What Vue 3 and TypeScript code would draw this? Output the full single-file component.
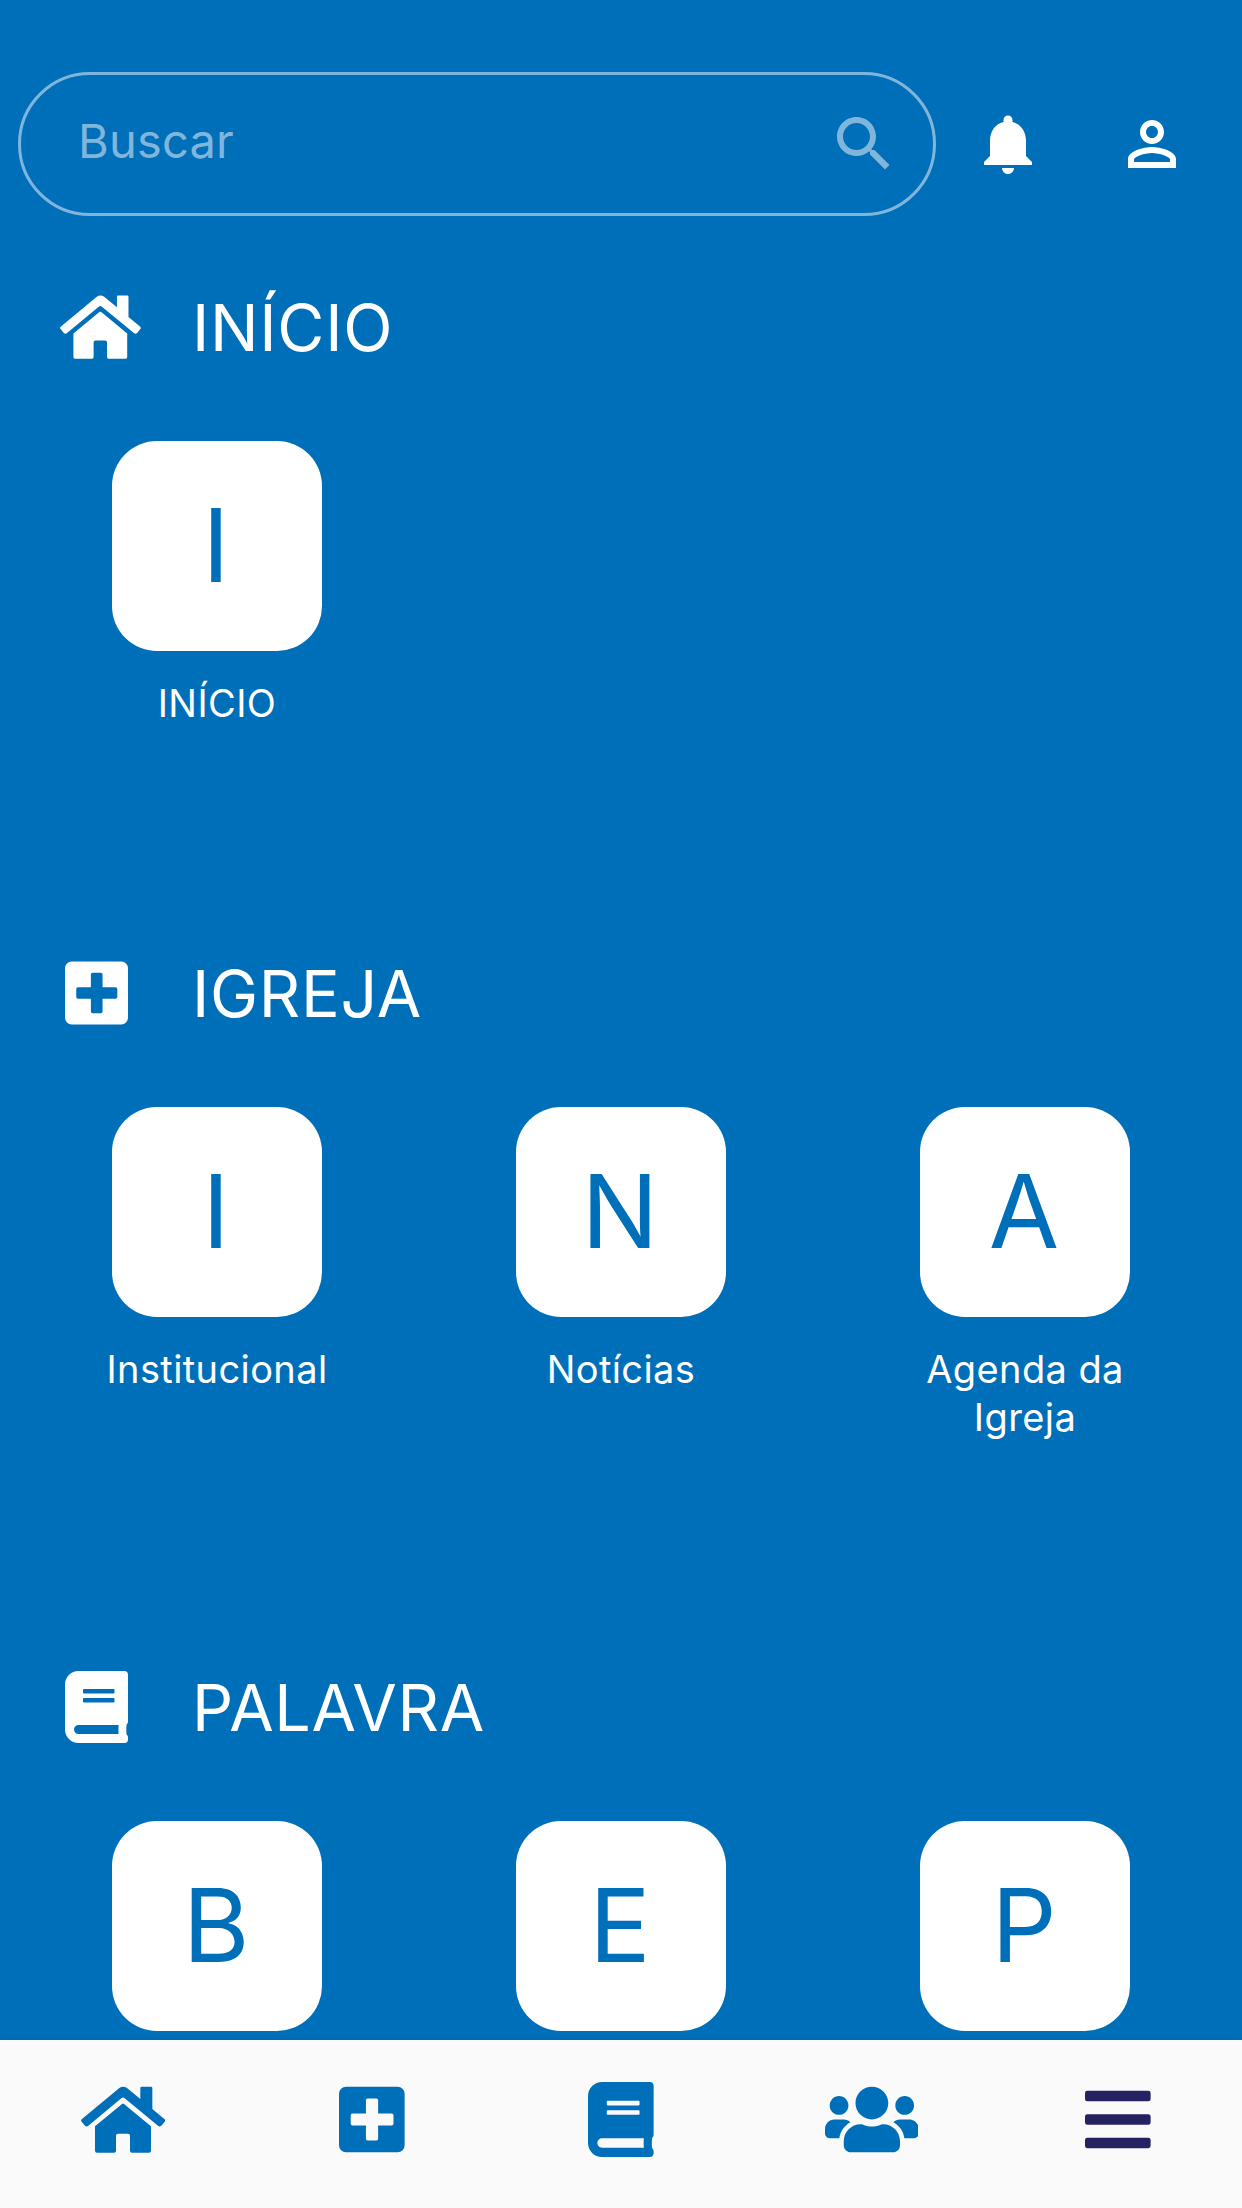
<script setup lang="ts">
interface Tile {
  letter: string
  label?: string
}
interface Section {
  icon: IconName
  title: string
  tiles: Tile[]
}
type IconName = 'home' | 'plus' | 'book' | 'users' | 'bars'

const icons: Record<IconName, { box: string; path: string }> = {
  home: {
    box: '63 157 253 225',
    path: 'M178 175Q189 167 201 175L241 208V175Q241 171 245 171H273Q277 171 277 175V238L313 268Q318 272 314 276L304 288Q299 293 294 288L194 206Q189 201 184 206L85 288Q80 293 75 288L65 276Q61 272 66 268ZM186 223Q189 220 192 223L273 290V363Q273 369 267 369H216Q210 369 210 363V318Q210 312 204 312H174Q168 312 168 318V363Q168 369 162 369H111Q105 369 105 363V290Z',
  },
  plus: {
    box: '0 0 448 512',
    path: 'M48 32H400a48 48 0 0 1 48 48V432a48 48 0 0 1-48 48H48a48 48 0 0 1-48-48V80a48 48 0 0 1 48-48ZM196 112a12 12 0 0 0-12 12V215H92a12 12 0 0 0-12 12V285a12 12 0 0 0 12 12H184V388a12 12 0 0 0 12 12H255a12 12 0 0 0 12-12V297H360a12 12 0 0 0 12-12V227a12 12 0 0 0-12-12H267V124a12 12 0 0 0-12-12Z',
  },
  book: {
    box: '0 0 448 512',
    path: 'M448 360V24c0-13.3-10.7-24-24-24H96C43 0 0 43 0 96v320c0 53 43 96 96 96h328c13.3 0 24-10.7 24-24v-16c0-7.5-3.5-14.3-8.9-18.7-4.2-15.4-4.2-59.3 0-74.7 5.4-4.3 8.9-11.1 8.9-18.6zM128 134c0-3.3 2.7-6 6-6h212c3.3 0 6 2.7 6 6v20c0 3.3-2.7 6-6 6H134c-3.3 0-6-2.7-6-6v-20zm0 64c0-3.3 2.7-6 6-6h212c3.3 0 6 2.7 6 6v20c0 3.3-2.7 6-6 6H134c-3.3 0-6-2.7-6-6v-20zm253.4 250H96c-17.7 0-32-14.3-32-32 0-17.6 14.4-32 32-32h285.4c-1.9 17.1-1.9 46.9 0 64z',
  },
  users: {
    box: '0 0 640 512',
    path: 'M96 224c35.3 0 64-28.7 64-64s-28.7-64-64-64-64 28.7-64 64 28.7 64 64 64zm448 0c35.3 0 64-28.7 64-64s-28.7-64-64-64-64 28.7-64 64 28.7 64 64 64zm32 32h-64c-17.6 0-33.5 7.1-45.1 18.6 40.3 22.1 68.9 62 75.1 109.4h66c17.7 0 32-14.3 32-32v-32c0-35.3-28.7-64-64-64zm-256 0c61.9 0 112-50.1 112-112S381.9 32 320 32 208 82.1 208 144s50.1 112 112 112zm76.8 32h-8.3c-20.8 10-43.9 16-68.5 16s-47.6-6-68.5-16h-8.3C179.6 288 128 339.6 128 403.2V432c0 26.5 21.5 48 48 48h288c26.5 0 48-21.5 48-48v-28.8c0-63.6-51.6-115.2-115.2-115.2zm-223.7-13.4C161.5 263.1 145.6 256 128 256H64c-35.3 0-64 28.7-64 64v32c0 17.7 14.3 32 32 32h65.9c6.3-47.4 34.9-87.3 75.2-109.4z',
  },
  bars: {
    box: '0 0 448 512',
    path: 'M16 60H432a16 16 0 0 1 16 16V116a16 16 0 0 1-16 16H16a16 16 0 0 1-16-16V76a16 16 0 0 1 16-16ZM16 220H432a16 16 0 0 1 16 16V276a16 16 0 0 1-16 16H16a16 16 0 0 1-16-16V236a16 16 0 0 1 16-16ZM16 380H432a16 16 0 0 1 16 16V436a16 16 0 0 1-16 16H16a16 16 0 0 1-16-16V396a16 16 0 0 1 16-16Z',
  },
}

const sections: Section[] = [
  { icon: 'home', title: 'INÍCIO', tiles: [{ letter: 'I', label: 'INÍCIO' }] },
  {
    icon: 'plus',
    title: 'IGREJA',
    tiles: [
      { letter: 'I', label: 'Institucional' },
      { letter: 'N', label: 'Notícias' },
      { letter: 'A', label: 'Agenda da Igreja' },
    ],
  },
  {
    icon: 'book',
    title: 'PALAVRA',
    tiles: [{ letter: 'B' }, { letter: 'E' }, { letter: 'P' }],
  },
]

const tabs: IconName[] = ['home', 'plus', 'book', 'users', 'bars']
</script>

<template>
  <div class="screen">
    <header class="top">
      <div class="search">
        <span class="placeholder">Buscar</span>
        <svg class="glyph" viewBox="0 0 24 24">
          <path d="M15.5 14h-.79l-.28-.27C15.41 12.59 16 11.11 16 9.5 16 5.91 13.09 3 9.5 3S3 5.91 3 9.5 5.91 16 9.5 16c1.61 0 3.09-.59 4.23-1.57l.27.28v.79l5 4.99L20.49 19l-4.99-5zm-6 0C7.01 14 5 11.99 5 9.5S7.01 5 9.5 5 14 7.01 14 9.5 11.99 14 9.5 14z" />
        </svg>
      </div>
      <svg class="glyph bell" viewBox="0 0 24 24">
        <path d="M12 22c1.1 0 2-.9 2-2h-4c0 1.1.9 2 2 2zm6-6v-5c0-3.07-1.64-5.64-4.5-6.32V4c0-.83-.67-1.5-1.5-1.5s-1.5.67-1.5 1.5v.68C7.63 5.36 6 7.92 6 11v5l-2 2v1h16v-1l-2-2z" />
      </svg>
      <svg class="glyph person" viewBox="0 0 24 24">
        <path d="M12 6c1.1 0 2 .9 2 2s-.9 2-2 2-2-.9-2-2 .9-2 2-2m0 9c2.7 0 5.8 1.29 6 2v1H6v-.99c.2-.72 3.3-2.01 6-2.01m0-11C9.79 4 8 5.79 8 8s1.79 4 4 4 4-1.79 4-4-1.79-4-4-4zm0 9c-2.67 0-8 1.34-8 4v3h16v-3c0-2.66-5.33-4-8-4z" />
      </svg>
    </header>

    <main class="content">
      <section v-for="s in sections" :key="s.title" class="section">
        <h2 class="heading">
          <span class="heading-icon">
            <svg :class="s.icon" :viewBox="icons[s.icon].box">
              <path fill-rule="evenodd" :d="icons[s.icon].path" />
            </svg>
          </span>
          <span class="title">{{ s.title }}</span>
        </h2>
        <div class="tiles">
          <div v-for="t in s.tiles" :key="t.letter" class="item">
            <div class="tile">{{ t.letter }}</div>
            <div v-if="t.label" class="label">{{ t.label }}</div>
          </div>
        </div>
      </section>
    </main>

    <nav class="tabbar">
      <span v-for="t in tabs" :key="t" :class="['tab', 'tab-' + t]">
        <svg :viewBox="icons[t].box">
          <path fill-rule="evenodd" :d="icons[t].path" />
        </svg>
      </span>
    </nav>
  </div>
</template>

<style>
body {
  margin: 0;
  overflow: hidden;
}
</style>

<style scoped>
.screen {
  width: 1242px;
  height: 2208px;
  display: flex;
  flex-direction: column;
  overflow: hidden;
  background: #006fb9;
  color: #fff;
  font-family: Inter, 'Liberation Sans', sans-serif;
}
svg {
  display: block;
  fill: currentColor;
  flex: none;
}
.top {
  display: flex;
  align-items: center;
  flex: none;
  padding: 72px 0 0 18px;
}
.search {
  box-sizing: border-box;
  width: 918px;
  height: 144px;
  border: 3px solid #80b6dc;
  border-radius: 72px;
  padding: 0 33px 0 57px;
  display: flex;
  align-items: center;
  justify-content: space-between;
  color: #80b6dc;
}
.placeholder {
  font-size: 47px;
  line-height: 60px;
  letter-spacing: 0.2px;
  margin-top: -7px;
}
.glyph {
  width: 72px;
  height: 72px;
}
.bell {
  margin-left: 36px;
}
.person {
  margin-left: 72px;
}
.content {
  flex: 1;
  min-height: 0;
  overflow: hidden;
  padding-top: 72px;
}
.section {
  padding-bottom: 227px;
}
.heading {
  margin: 0 0 74px;
  height: 79px;
  display: flex;
  align-items: center;
  font-weight: 400;
}
.heading-icon {
  width: 132px;
  padding: 0 0 2px 60px;
  flex: none;
}
.heading-icon svg {
  height: 72px;
  margin-left: 4.5px;
}
.heading-icon .home {
  margin-left: 0;
}
.title {
  font-size: 64.5px;
  line-height: 79px;
  letter-spacing: 0.7px;
  padding-top: 2px;
}
.tiles {
  display: grid;
  grid-template-columns: repeat(3, 404px);
  padding-left: 15px;
}
.item {
  display: flex;
  flex-direction: column;
  align-items: center;
}
.tile {
  box-sizing: border-box;
  width: 210px;
  height: 210px;
  padding-right: 2px;
  border-radius: 45px;
  background: #fff;
  color: #006fb9;
  font-size: 102px;
  line-height: 208px;
  text-align: center;
}
.label {
  width: 230px;
  margin-top: 28px;
  font-size: 38px;
  line-height: 48px;
  letter-spacing: 0.4px;
  text-align: center;
}
.tabbar {
  height: 168px;
  flex: none;
  display: grid;
  grid-template-columns: repeat(5, 1fr);
  background: #fafafa;
  color: #006fb9;
  box-shadow: 0 0 8px rgba(0, 0, 0, 0.08);
  position: relative;
}
.tab {
  display: flex;
  justify-content: center;
  padding-top: 42px;
}
.tab svg {
  height: 75px;
}
.tab-home {
  padding-right: 2px;
}
.tab-plus {
  padding-right: 1px;
}
.tab-users {
  padding-left: 4px;
}
.tab-bars {
  color: #262262;
}
</style>
